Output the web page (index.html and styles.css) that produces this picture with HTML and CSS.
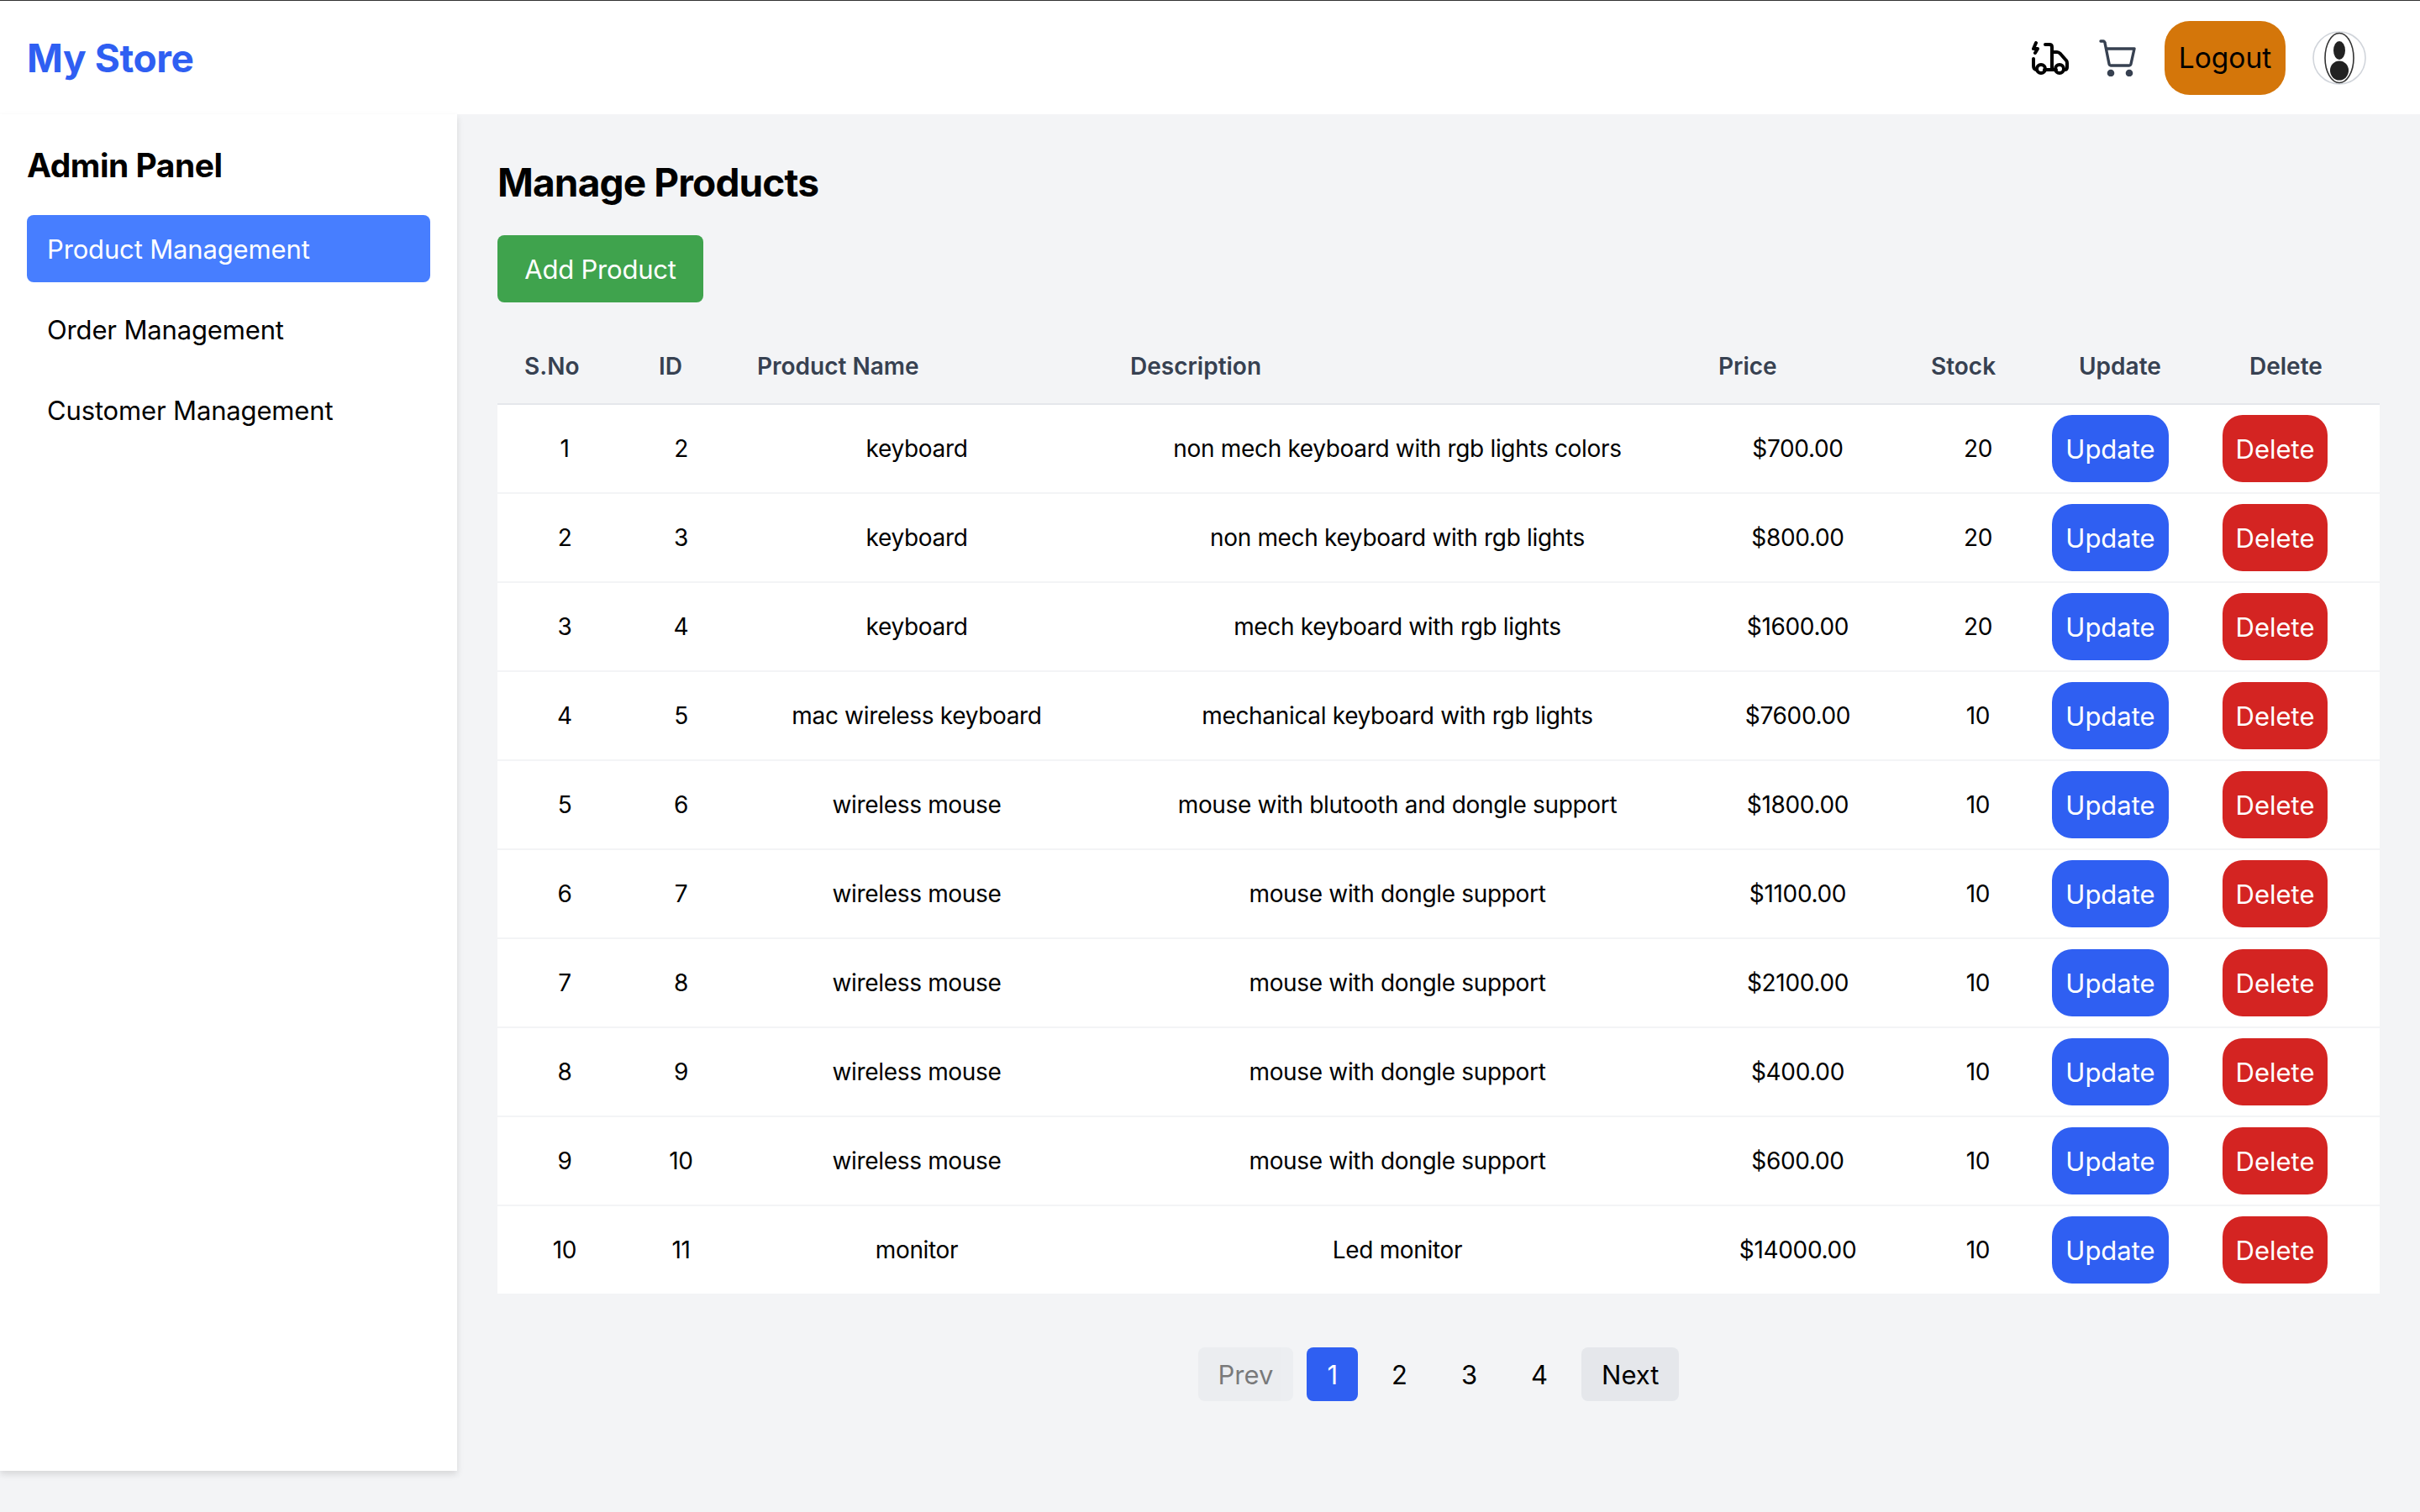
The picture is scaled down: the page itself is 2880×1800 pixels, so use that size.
FILE: index.html
```html
<!DOCTYPE html>
<html lang="en">
<head>
  <meta charset="UTF-8">
  <title>My Store</title>
  <link rel="stylesheet" href="styles.css">
</head>
<body>
  <header class="topbar">
    <a class="brand">My Store</a>
    <div class="topbar-actions">
      <svg class="icon truck" viewBox="0 0 44 40" fill="none" stroke="#000" stroke-width="4" stroke-linecap="round" stroke-linejoin="round">
        <path d="M5 2 2 9h5l-3 5"/>
        <path d="M16 4h5c2 0 3 1 3 3v26"/>
        <path d="M2 21v8c0 3 1 5 4 5"/>
        <path d="M15 34h14"/>
        <path d="M24 13h6c2 0 3 1 4 2l7 8c1 1 1 2 1 3v5c0 2-1 3-3 3"/>
        <circle cx="11" cy="33" r="5"/>
        <circle cx="33" cy="33" r="5"/>
      </svg>
      <svg class="icon cart" viewBox="0 0 44 44" fill="none" stroke="#374151" stroke-width="3.4" stroke-linecap="round" stroke-linejoin="round">
        <path d="M2 2h3c1 0 2 1 2 2l5 25c0 1 1 2 2 2h22c1 0 2-1 2-2l4-18H9"/>
        <circle cx="14" cy="40" r="2.6" fill="#374151"/>
        <circle cx="36" cy="40" r="2.6" fill="#374151"/>
      </svg>
      <button class="logout">Logout</button>
      <svg class="avatar" viewBox="0 0 64 64">
        <circle cx="32" cy="32" r="31" fill="#fff" stroke="#d1d5db" stroke-width="1.6"/>
        <ellipse cx="32" cy="32" rx="17" ry="29.5" fill="none" stroke="#333" stroke-width="1.6"/>
        <ellipse cx="32" cy="23" rx="7" ry="11" fill="#222"/>
        <ellipse cx="32" cy="47" rx="11" ry="11.5" fill="#222"/>
      </svg>
    </div>
  </header>

  <div class="layout">
    <aside class="sidebar">
      <h2 class="sidebar-title">Admin Panel</h2>
      <nav class="sidebar-nav">
        <a class="nav-item active">Product Management</a>
        <a class="nav-item">Order Management</a>
        <a class="nav-item">Customer Management</a>
      </nav>
    </aside>

    <main class="content">
      <h1 class="page-title">Manage Products</h1>
      <button class="add-btn">Add Product</button>

      <table class="products">
        <colgroup>
          <col class="c-sno"><col class="c-id"><col class="c-name"><col class="c-desc">
          <col class="c-price"><col class="c-stock"><col class="c-update"><col class="c-delete">
        </colgroup>
        <thead>
          <tr>
            <th>S.No</th><th>ID</th><th>Product Name</th><th>Description</th>
            <th>Price</th><th>Stock</th><th>Update</th><th>Delete</th>
          </tr>
        </thead>
        <tbody>
          <tr><td>1</td><td>2</td><td>keyboard</td><td>non mech keyboard with rgb lights colors</td><td>$700.00</td><td>20</td><td class="btn-cell"><button class="row-btn update">Update</button></td><td class="btn-cell"><button class="row-btn delete">Delete</button></td></tr>
          <tr><td>2</td><td>3</td><td>keyboard</td><td>non mech keyboard with rgb lights</td><td>$800.00</td><td>20</td><td class="btn-cell"><button class="row-btn update">Update</button></td><td class="btn-cell"><button class="row-btn delete">Delete</button></td></tr>
          <tr><td>3</td><td>4</td><td>keyboard</td><td>mech keyboard with rgb lights</td><td>$1600.00</td><td>20</td><td class="btn-cell"><button class="row-btn update">Update</button></td><td class="btn-cell"><button class="row-btn delete">Delete</button></td></tr>
          <tr><td>4</td><td>5</td><td>mac wireless keyboard</td><td>mechanical keyboard with rgb lights</td><td>$7600.00</td><td>10</td><td class="btn-cell"><button class="row-btn update">Update</button></td><td class="btn-cell"><button class="row-btn delete">Delete</button></td></tr>
          <tr><td>5</td><td>6</td><td>wireless mouse</td><td>mouse with blutooth and dongle support</td><td>$1800.00</td><td>10</td><td class="btn-cell"><button class="row-btn update">Update</button></td><td class="btn-cell"><button class="row-btn delete">Delete</button></td></tr>
          <tr><td>6</td><td>7</td><td>wireless mouse</td><td>mouse with dongle support</td><td>$1100.00</td><td>10</td><td class="btn-cell"><button class="row-btn update">Update</button></td><td class="btn-cell"><button class="row-btn delete">Delete</button></td></tr>
          <tr><td>7</td><td>8</td><td>wireless mouse</td><td>mouse with dongle support</td><td>$2100.00</td><td>10</td><td class="btn-cell"><button class="row-btn update">Update</button></td><td class="btn-cell"><button class="row-btn delete">Delete</button></td></tr>
          <tr><td>8</td><td>9</td><td>wireless mouse</td><td>mouse with dongle support</td><td>$400.00</td><td>10</td><td class="btn-cell"><button class="row-btn update">Update</button></td><td class="btn-cell"><button class="row-btn delete">Delete</button></td></tr>
          <tr><td>9</td><td>10</td><td>wireless mouse</td><td>mouse with dongle support</td><td>$600.00</td><td>10</td><td class="btn-cell"><button class="row-btn update">Update</button></td><td class="btn-cell"><button class="row-btn delete">Delete</button></td></tr>
          <tr><td>10</td><td>11</td><td>monitor</td><td>Led monitor</td><td>$14000.00</td><td>10</td><td class="btn-cell"><button class="row-btn update">Update</button></td><td class="btn-cell"><button class="row-btn delete">Delete</button></td></tr>
        </tbody>
      </table>

      <div class="pagination">
        <button class="page-btn nav disabled">Prev</button>
        <button class="page-btn current">1</button>
        <button class="page-btn">2</button>
        <button class="page-btn">3</button>
        <button class="page-btn">4</button>
        <button class="page-btn nav">Next</button>
      </div>
    </main>
  </div>
</body>
</html>
```

FILE: styles.css
```css
/* General styles */
body {
  margin: 0;
  height: 1800px;
  background-color: #f3f4f6;
  color: #000;
  font-family: Inter, "Noto Sans", sans-serif;
  font-size: 31px;
  overflow: hidden;
}

button {
  font-family: inherit;
  font-size: inherit;
  border: none;
  padding: 0;
  cursor: pointer;
}

/* Top bar */
.topbar {
  box-sizing: border-box;
  height: 136px;
  border-top: 1px solid #333;
  background-color: #fff;
  display: flex;
  align-items: center;
  justify-content: space-between;
  padding: 0 64px 0 32px;
}

.brand {
  color: #2f5ff2;
  font-size: 46px;
  font-weight: 700;
  letter-spacing: -0.4px;
}

.topbar-actions {
  display: flex;
  align-items: center;
}

.icon {
  display: block;
}

.truck {
  width: 44px;
  height: 40px;
  margin-right: 36px;
}

.cart {
  width: 44px;
  height: 44px;
  margin-right: 34px;
}

.logout {
  width: 144px;
  height: 88px;
  border-radius: 30px;
  background-color: #d4760a;
  color: #000;
  font-size: 33.5px;
  margin-right: 32px;
}

.avatar {
  width: 64px;
  height: 64px;
  display: block;
}

/* Layout */
.layout {
  display: flex;
  align-items: flex-start;
}

/* Sidebar */
.sidebar {
  box-sizing: border-box;
  width: 544px;
  height: 1615px;
  padding: 32px;
  background-color: #fff;
  box-shadow: 0 4px 8px rgba(0, 0, 0, 0.12);
}

.sidebar-title {
  margin: 1px 0 31px;
  font-size: 39px;
  line-height: 56px;
  font-weight: 700;
  letter-spacing: -0.5px;
}

.sidebar-nav {
  display: flex;
  flex-direction: column;
  gap: 16px;
}

.nav-item {
  height: 80px;
  line-height: 81px;
  padding: 0 24px;
  border-radius: 8px;
  letter-spacing: -0.15px;
}

.nav-item.active {
  background-color: #477eff;
  color: #fff;
}

/* Main content */
.content {
  flex: 1;
  padding: 48px 48px 0;
}

.page-title {
  margin: 1px 0 31px;
  font-size: 46px;
  line-height: 64px;
  font-weight: 700;
  letter-spacing: -0.85px;
}

.add-btn {
  display: block;
  width: 245px;
  height: 80px;
  border-radius: 8px;
  background-color: #3fa34d;
  color: #fff;
  letter-spacing: -0.2px;
}

/* Products table */
.products {
  width: 2240px;
  margin-top: 30px;
  table-layout: fixed;
  border-collapse: collapse;
}

.c-sno { width: 160px; }
.c-id { width: 117px; }
.c-name { width: 444px; }
.c-desc { width: 700px; }
.c-price { width: 253px; }
.c-stock { width: 176px; }
.c-update { width: 203px; }
.c-delete { width: 187px; }

.products th {
  height: 88px;
  padding: 2px 0 0 32px;
  text-align: left;
  color: #374151;
  font-size: 28px;
  font-weight: 600;
  border-bottom: 2px solid #e5e7eb;
}

.products td {
  height: 104px;
  padding: 0;
  text-align: center;
  font-size: 28px;
  letter-spacing: -0.33px;
  background-color: #fff;
  border-bottom: 2px solid #f3f4f6;
}

.products tr:last-child td {
  border-bottom: none;
}

.products td.btn-cell {
  text-align: left;
}

.row-btn {
  display: block;
  height: 80px;
  border-radius: 24px;
  color: #fff;
  font-size: 31px;
}

.row-btn.update {
  width: 139px;
  background-color: #2f5ff2;
}

.row-btn.delete {
  width: 125px;
  background-color: #d42422;
}

/* Pagination */
.pagination {
  display: flex;
  justify-content: center;
  gap: 16px;
  margin-top: 64px;
}

.page-btn {
  height: 64px;
  padding: 0 24px;
  border-radius: 8px;
  background: none;
  color: #000;
}

.page-btn.nav {
  background-color: #e5e7eb;
}

.page-btn.current {
  background-color: #2f5ff2;
  color: #fff;
}

.page-btn.disabled {
  opacity: 0.5;
}
```
